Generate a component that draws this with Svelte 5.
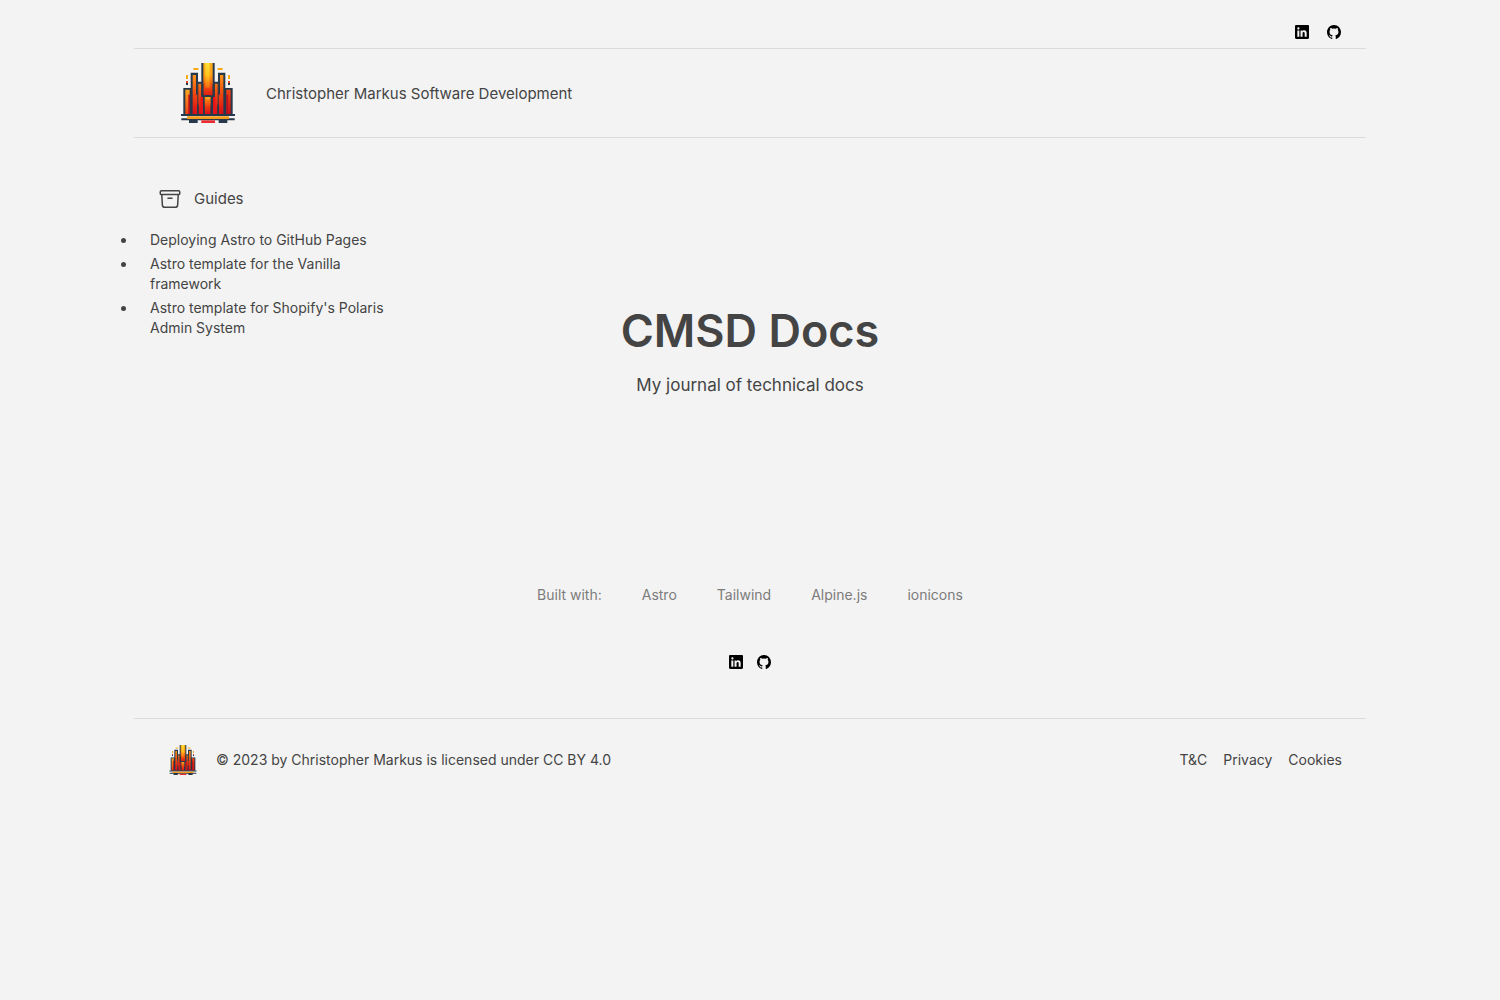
<script>
  const guides = [
    'Deploying Astro to GitHub Pages',
    'Astro template for the Vanilla framework',
    "Astro template for Shopify's Polaris Admin System"
  ];
  const tools = ['Astro', 'Tailwind', 'Alpine.js', 'ionicons'];
  const legal = ['T&C', 'Privacy', 'Cookies'];
</script>

{#snippet logo()}
  <svg class="logo" viewBox="6 12 192 192" aria-hidden="true">
    <defs>
      <linearGradient id="tall" x1="0" y1="0" x2="0" y2="1">
        <stop offset="0" stop-color="#f9b01c" />
        <stop offset=".4" stop-color="#fb9a18" />
        <stop offset=".7" stop-color="#f0500f" />
        <stop offset="1" stop-color="#df1d12" />
      </linearGradient>
      <linearGradient id="core" x1="0" y1="0" x2="0" y2="1">
        <stop offset="0" stop-color="#ffdf3a" />
        <stop offset=".5" stop-color="#ffc41e" />
        <stop offset="1" stop-color="#f36a10" />
      </linearGradient>
      <linearGradient id="flame" x1="0" y1="0" x2="0" y2="1">
        <stop offset="0" stop-color="#fb9518" />
        <stop offset=".5" stop-color="#f1440f" />
        <stop offset="1" stop-color="#d80b18" />
      </linearGradient>
      <linearGradient id="side" x1="0" y1="0" x2="1" y2="1">
        <stop offset="0" stop-color="#fcac20" />
        <stop offset=".5" stop-color="#ef4112" />
        <stop offset="1" stop-color="#c30b1b" />
      </linearGradient>
    </defs>
    <path fill="#26394a" d="M28 93h22V47h22v27h10V18h40v56h10V47h22v46h22v80H28z" />
    <path fill="url(#side)" d="M34 98h13v74H34zM157 98h13v74h-13z" />
    <path fill="#b51220" d="M43 113h5v59h-5zM157 113h5v59h-5z" />
    <path fill="url(#flame)" d="M56 54h10v23h4v95H56zM138 54h10v118h-14V78h4zM73 80h9v92h-9zM122 80h9v92h-9z" />
    <path fill="url(#tall)" d="M88 18h28v97H88z" />
    <path fill="url(#core)" d="M94 18h13v74H94z" />
    <path fill="#e81419" d="M80 120h7v52h-7zM117 120h7v52h-7z" />
    <path fill="url(#flame)" d="M92 120h18v52H92z" />
    <path fill="#26394a" d="M66 75h5v38h-5zM133 75h5v38h-5zM82 81h6v38h-6zM116 81h6v38h-6zM87 114h22v6H87zM87 145h5v27h-5zM110 145h5v27h-5zM48 96h6v45h-6zM150 96h6v45h-6zM69 143h5v29h-5zM130 143h5v29h-5z" />
    <path fill="#fba91d" d="M58 33h15v6H58zM131 33h15v6h-15zM36 54h6v12h-6zM162 54h6v12h-6zM95 121h13v6H95z" />
    <path fill="#e54a1a" d="M36 72h6v6h-6zM162 72h6v6h-6z" />
    <path fill="#26394a" d="M36 78h6v6h-6zM162 78h6v6h-6zM21 171h162v6H21zM22 184h160v6H22zM45 190h26v8H45zM134 190h26v8h-26z" />
    <path fill="#f59c1d" d="M39 178h126v8H39z" />
    <path fill="#e82b2f" d="M82 190h41v8H82z" />
  </svg>
{/snippet}

{#snippet social()}
  <a href="#linkedin" aria-label="LinkedIn">
    <svg class="brand" viewBox="0 0 512 512" aria-hidden="true">
      <path d="M444.17 32H70.28C49.85 32 32 46.7 32 66.89v374.72C32 461.91 49.85 480 70.28 480h373.78c20.54 0 35.94-18.21 35.94-38.39V66.89C480.12 46.7 464.6 32 444.17 32zm-273.3 373.43h-64.18V205.88h64.18zM141 175.54h-.46c-20.54 0-33.84-15.29-33.84-34.43 0-19.49 13.65-34.42 34.65-34.42s33.85 14.82 34.31 34.42c-.01 19.14-13.31 34.43-34.66 34.43zm264.43 229.89h-64.18V296.32c0-26.14-9.34-44-32.56-44-17.74 0-28.24 12-32.91 23.69-1.75 4.2-2.22 9.92-2.22 15.76v113.66h-64.18V205.88h64.18v27.77c9.34-13.3 23.93-32.44 57.88-32.44 42.13 0 74 27.77 74 87.64z" />
    </svg>
  </a>
  <a href="#github" aria-label="GitHub">
    <svg class="brand" viewBox="0 0 512 512" aria-hidden="true">
      <path d="M256 32C132.3 32 32 134.9 32 261.7c0 101.5 64.2 187.5 153.2 217.9a17.56 17.56 0 003.8.4c8.3 0 11.5-6.1 11.5-11.4 0-5.5-.2-19.9-.3-39.1a102.4 102.4 0 01-22.6 2.7c-43.1 0-52.9-33.5-52.9-33.5-10.2-26.5-24.9-33.6-24.9-33.6-19.5-13.7-.1-14.1 1.4-14.1h.1c22.5 2 34.3 23.8 34.3 23.8 11.2 19.6 26.2 25.1 39.6 25.1a63 63 0 0025.6-6c2-14.8 7.8-24.9 14.2-30.7-49.7-5.8-102-25.5-102-113.5 0-25.1 8.7-45.6 23-61.6-2.3-5.8-10-29.2 2.2-60.8a18.64 18.64 0 015-.5c8.1 0 26.4 3.1 56.6 24.1a208.21 208.21 0 01112.2 0c30.2-21 48.5-24.1 56.6-24.1a18.64 18.64 0 015 .5c12.2 31.6 4.5 55 2.2 60.8 14.3 16.1 23 36.6 23 61.6 0 88.2-52.4 107.6-102.3 113.3 8 7.1 15.2 21.1 15.2 42.5 0 30.7-.3 55.5-.3 63 0 5.4 3.1 11.5 11.4 11.5a19.35 19.35 0 004-.4C415.9 449.2 480 363.1 480 261.7 480 134.9 379.7 32 256 32z" />
    </svg>
  </a>
{/snippet}

<div class="page">
  <div class="topbar">{@render social()}</div>
  <header>
    <a class="home" href="#home">
      {@render logo()}
      <span>Christopher Markus Software Development</span>
    </a>
  </header>

  <div class="content">
    <nav class="guides" aria-labelledby="guides-title">
      <h2 id="guides-title">
        <svg viewBox="0 0 24 24" aria-hidden="true">
          <path d="M20.25 7.5l-.625 10.632a2.25 2.25 0 01-2.247 2.118H6.622a2.25 2.25 0 01-2.247-2.118L3.75 7.5M10 11.25h4M3.375 7.5h17.25c.621 0 1.125-.504 1.125-1.125v-1.5c0-.621-.504-1.125-1.125-1.125H3.375c-.621 0-1.125.504-1.125 1.125v1.5c0 .621.504 1.125 1.125 1.125z" />
        </svg>
        Guides
      </h2>
      <ul>
        {#each guides as guide}
          <li><a href="#guide">{guide}</a></li>
        {/each}
      </ul>
    </nav>
    <main>
      <h1>CMSD Docs</h1>
      <p>My journal of technical docs</p>
    </main>
  </div>

  <footer>
    <div class="built">
      <span>Built with:</span>
      {#each tools as tool}
        <a href="#tool">{tool}</a>
      {/each}
    </div>
    <div class="follow">{@render social()}</div>
    <div class="bottom">
      <div class="license">
        {@render logo()}
        <span>© 2023 by Christopher Markus is licensed under CC BY 4.0</span>
      </div>
      <div class="legal">
        {#each legal as item}
          <a href="#legal">{item}</a>
        {/each}
      </div>
    </div>
  </footer>
</div>

<style>
  :global(body) {
    margin: 0;
    background: #f3f3f3;
  }
  .page {
    box-sizing: border-box;
    max-width: 1280px;
    margin: 0 auto;
    padding: 0 24px;
    color: #444;
    font: 14px/20px Inter, 'Liberation Sans', sans-serif;
  }
  a {
    color: inherit;
    text-decoration: none;
  }
  svg {
    display: block;
    flex: none;
  }
  .brand {
    width: 16px;
    height: 16px;
    fill: #000;
  }
  .topbar {
    display: flex;
    justify-content: flex-end;
    gap: 16px;
    padding: 24px 24px 8px;
  }
  header {
    display: flex;
    padding: 12px 42px;
    border: solid #dadada;
    border-width: 1px 0;
  }
  .home {
    display: flex;
    align-items: center;
    gap: 26px;
    font-size: 15px;
    line-height: 25px;
  }
  .home .logo {
    width: 64px;
    height: 64px;
  }
  .content {
    display: grid;
    grid-template-columns: 1fr 2fr 1fr;
    padding-top: 48px;
  }
  .guides {
    padding: 0 48px 0 16px;
  }
  h2 {
    display: flex;
    align-items: center;
    gap: 12px;
    margin: 0;
    padding: 1px 8px;
    font-size: 15px;
    line-height: 24px;
    font-weight: 400;
  }
  h2 svg {
    width: 24px;
    height: 24px;
    fill: none;
    stroke: currentColor;
    stroke-width: 1.5;
    stroke-linecap: round;
    stroke-linejoin: round;
  }
  ul {
    display: grid;
    gap: 3px;
    margin: 17px 0 0 -12px;
    padding: 0;
  }
  li {
    padding-left: 12px;
  }
  li::marker {
    font-size: 16px;
  }
  main {
    padding: 113px 0 138px;
    text-align: center;
  }
  h1 {
    margin: 0;
    font-size: 45px;
    line-height: 64px;
    font-weight: 600;
  }
  p {
    margin: 8px 0 0;
    font-size: 17px;
    line-height: 28px;
  }
  .built {
    display: flex;
    justify-content: center;
    gap: 40px;
    padding: 48px 0;
    color: #7c7c7c;
  }
  .follow {
    display: flex;
    justify-content: center;
    gap: 12px;
    padding: 1px 0 48px;
  }
  .bottom {
    display: flex;
    align-items: center;
    justify-content: space-between;
    padding: 25px 24px 24px 33px;
    border-top: 1px solid #dadada;
  }
  .license {
    display: flex;
    align-items: center;
    gap: 17px;
  }
  .license .logo {
    width: 32px;
    height: 32px;
  }
  .legal {
    display: flex;
    gap: 16px;
  }
</style>
